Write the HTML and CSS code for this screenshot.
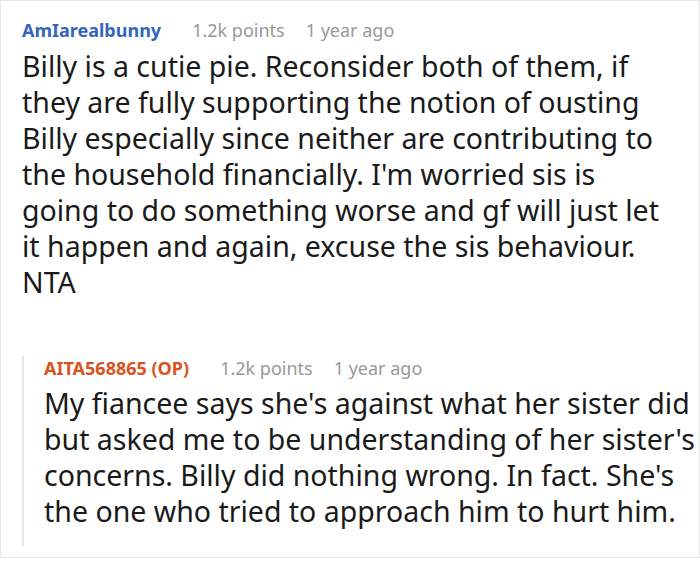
FILE: index.html
```html
<!DOCTYPE html>
<html lang="en">
<head>
<meta charset="utf-8">
<title>Comments</title>
<link rel="stylesheet" href="styles.css">
</head>
<body>
<div class="card">
  <div class="comment">
    <div class="meta">
      <span class="author">AmIarealbunny</span>
      <span class="points">1.2k points</span>
      <span class="time">1 year ago</span>
    </div>
    <p class="text">Billy is a cutie pie. Reconsider both of them, if<br>they are fully supporting the notion of ousting<br>Billy especially since neither are contributing to<br>the household financially. I'm worried sis is<br>going to do something worse and gf will just let<br>it happen and again, excuse the sis behaviour.<br>NTA</p>
  </div>
  <div class="reply">
    <div class="meta meta-reply">
      <span class="author op">AITA568865 (OP)</span>
      <span class="points">1.2k points</span>
      <span class="time">1 year ago</span>
    </div>
    <p class="text text-reply">My fiancee says she's against what her sister did<br>but asked me to be understanding of her sister's<br>concerns. Billy did nothing wrong. In fact. She's<br>the one who tried to approach him to hurt him.</p>
  </div>
</div>
</body>
</html>
```

FILE: styles.css
```css
html, body {
  margin: 0;
  padding: 0;
  background: #ffffff;
}

body {
  font-family: "Noto Sans", "Open Sans", sans-serif;
  color: #1a1a1a;
}

.card {
  box-sizing: border-box;
  width: 700px;
  height: 558px;
  border: 1px solid #e6e6e6;
  padding: 17px 0 0 21px;
  overflow: hidden;
}

.meta {
  display: flex;
  align-items: baseline;
  font-size: 18px;
  line-height: 24px;
  color: #999999;
}

.author {
  font-weight: 700;
  color: #3366bb;
  margin-right: 31px;
}

.author.op {
  color: #d9531e;
}

.points {
  margin-right: 21px;
}

.text {
  margin: 6px 0 0 0;
  font-size: 28.5px;
  line-height: 36px;
  white-space: nowrap;
}

.reply {
  margin-top: 66px;
  border-left: 2px solid #e6e6e6;
  padding: 0 0 17px 20px;
}

.meta-reply {
  margin-top: -10px;
}

.text-reply {
  margin-top: 5px;
}
```
